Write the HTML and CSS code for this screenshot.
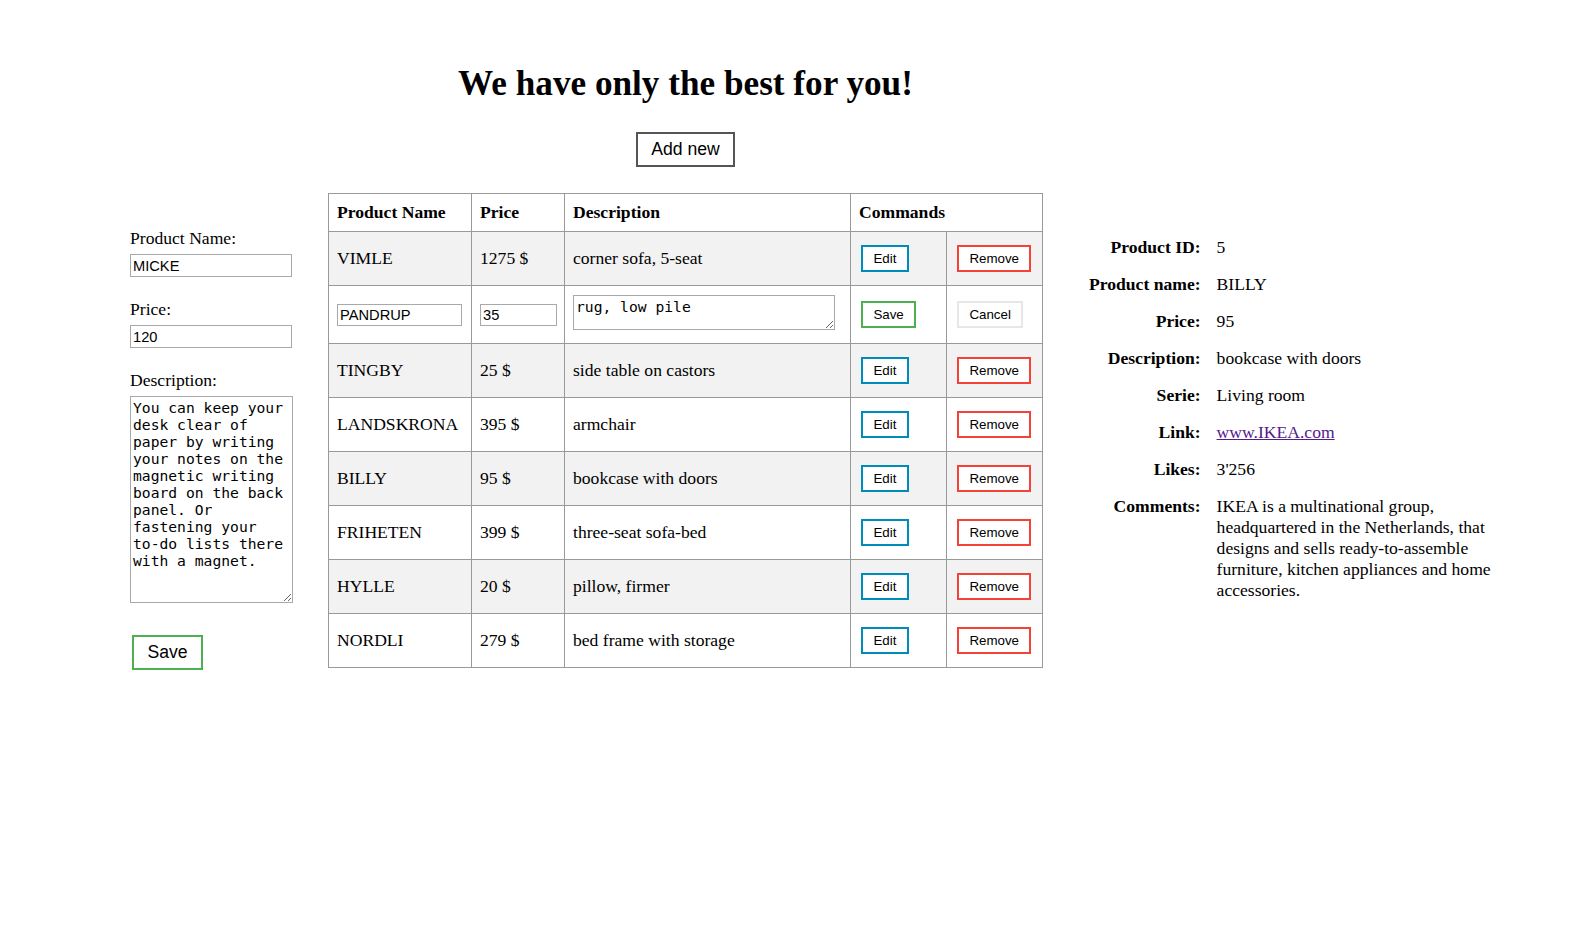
FILE: index.html
```html
<!DOCTYPE html>
<html lang="en">
<head>
<meta charset="utf-8">
<title>Products</title>
<link rel="stylesheet" href="styles.css">
</head>
<body>
<div class="page">
  <form class="side-form">
    <label class="field-label" for="f-name">Product Name:</label>
    <input class="field-input" id="f-name" type="text" value="MICKE">
    <label class="field-label field-label-gap" for="f-price">Price:</label>
    <input class="field-input" id="f-price" type="text" value="120">
    <label class="field-label field-label-gap" for="f-desc">Description:</label>
    <textarea class="field-textarea" id="f-desc">You can keep your desk clear of paper by writing your notes on the magnetic writing board on the back panel. Or fastening your to-do lists there with a magnet.</textarea>
    <button class="btn btn-lg btn-green btn-form-save" type="button">Save</button>
  </form>

  <main class="main">
    <h1 class="title">We have only the best for you!</h1>
    <button class="btn btn-lg btn-dark" type="button">Add new</button>
    <table class="products">
      <colgroup>
        <col class="col-name">
        <col class="col-price">
        <col class="col-desc">
        <col class="col-cmd">
        <col class="col-cmd">
      </colgroup>
      <thead>
        <tr>
          <th>Product Name</th>
          <th>Price</th>
          <th>Description</th>
          <th colspan="2">Commands</th>
        </tr>
      </thead>
      <tbody>
        <tr>
          <td>VIMLE</td><td>1275 $</td><td>corner sofa, 5-seat</td>
          <td><button class="btn btn-sm btn-blue" type="button">Edit</button></td>
          <td><button class="btn btn-sm btn-red" type="button">Remove</button></td>
        </tr>
        <tr class="edit-row">
          <td><input class="cell-input cell-input-name" type="text" value="PANDRUP"></td>
          <td><input class="cell-input cell-input-price" type="text" value="35"></td>
          <td><textarea class="cell-textarea">rug, low pile</textarea></td>
          <td><button class="btn btn-sm btn-green" type="button">Save</button></td>
          <td><button class="btn btn-sm btn-gray" type="button">Cancel</button></td>
        </tr>
        <tr>
          <td>TINGBY</td><td>25 $</td><td>side table on castors</td>
          <td><button class="btn btn-sm btn-blue" type="button">Edit</button></td>
          <td><button class="btn btn-sm btn-red" type="button">Remove</button></td>
        </tr>
        <tr>
          <td>LANDSKRONA</td><td>395 $</td><td>armchair</td>
          <td><button class="btn btn-sm btn-blue" type="button">Edit</button></td>
          <td><button class="btn btn-sm btn-red" type="button">Remove</button></td>
        </tr>
        <tr>
          <td>BILLY</td><td>95 $</td><td>bookcase with doors</td>
          <td><button class="btn btn-sm btn-blue" type="button">Edit</button></td>
          <td><button class="btn btn-sm btn-red" type="button">Remove</button></td>
        </tr>
        <tr>
          <td>FRIHETEN</td><td>399 $</td><td>three-seat sofa-bed</td>
          <td><button class="btn btn-sm btn-blue" type="button">Edit</button></td>
          <td><button class="btn btn-sm btn-red" type="button">Remove</button></td>
        </tr>
        <tr>
          <td>HYLLE</td><td>20 $</td><td>pillow, firmer</td>
          <td><button class="btn btn-sm btn-blue" type="button">Edit</button></td>
          <td><button class="btn btn-sm btn-red" type="button">Remove</button></td>
        </tr>
        <tr>
          <td>NORDLI</td><td>279 $</td><td>bed frame with storage</td>
          <td><button class="btn btn-sm btn-blue" type="button">Edit</button></td>
          <td><button class="btn btn-sm btn-red" type="button">Remove</button></td>
        </tr>
      </tbody>
    </table>
  </main>

  <aside class="details">
    <div class="d-label">Product ID:</div><div class="d-value">5</div>
    <div class="d-label">Product name:</div><div class="d-value">BILLY</div>
    <div class="d-label">Price:</div><div class="d-value">95</div>
    <div class="d-label">Description:</div><div class="d-value">bookcase with doors</div>
    <div class="d-label">Serie:</div><div class="d-value">Living room</div>
    <div class="d-label">Link:</div><div class="d-value"><a class="d-link" href="#">www.IKEA.com</a></div>
    <div class="d-label">Likes:</div><div class="d-value">3'256</div>
    <div class="d-label">Comments:</div><div class="d-value d-comments">IKEA is a multinational group, headquartered in the Netherlands, that designs and sells ready-to-assemble furniture, kitchen appliances and home accessories.</div>
  </aside>
</div>
</body>
</html>
```

FILE: styles.css
```css
html, body {
  margin: 0;
  padding: 0;
  background: #fff;
}

body {
  font-family: "Liberation Serif", "Times New Roman", serif;
  font-size: 17.6px;
  color: #000;
}

.page {
  display: flex;
  align-items: flex-start;
  padding-left: 130px;
}

/* ---------- left form ---------- */
.side-form {
  display: flex;
  flex-direction: column;
  align-items: flex-start;
  width: 163px;
  margin-top: 228px;
  flex: none;
}

.field-label {
  display: block;
  line-height: normal;
}

.field-label-gap {
  margin-top: 22px;
}

.field-input {
  box-sizing: border-box;
  width: 162px;
  height: 23px;
  margin: 5px 0 0 0;
  padding: 1px 2px;
  border: 1px solid #a9a9a9;
  font-family: "Liberation Sans", Arial, sans-serif;
  font-size: 14.67px;
  color: #000;
  background: #fff;
}

.field-textarea {
  box-sizing: border-box;
  width: 163px;
  height: 207px;
  margin: 5px 0 0 0;
  padding: 2px;
  border: 1px solid #a9a9a9;
  font-family: "DejaVu Sans Mono", monospace;
  font-size: 14.67px;
  line-height: normal;
  color: #000;
  overflow: hidden;
}

.btn-form-save {
  margin: 32px 0 0 2px;
}

/* ---------- buttons ---------- */
.btn {
  background: #fff;
  color: #000;
  font-family: "Liberation Sans", Arial, sans-serif;
  border-style: solid;
  border-width: 2px;
  cursor: pointer;
  line-height: normal;
}

.btn-lg {
  font-size: 17.6px;
  padding: 5px 13.5px;
}

.btn-sm {
  font-size: 13.33px;
  padding: 4px 10.4px;
  margin: 4px 2px;
  vertical-align: baseline;
}

.btn-dark { border-color: #555555; }
.btn-green { border-color: #4caf50; }
.btn-blue { border-color: #008cba; }
.btn-red { border-color: #f44336; }
.btn-gray { border-color: #e7e7e7; }

/* ---------- main column ---------- */
.main {
  width: 715px;
  margin-left: 35px;
  flex: none;
  display: flex;
  flex-direction: column;
  align-items: center;
  padding-top: 64px;
}

.title {
  margin: 0;
  font-size: 35.2px;
  font-weight: bold;
  line-height: normal;
}

.main .btn-dark {
  margin-top: 27.6px;
}

.products {
  margin-top: 26px;
  align-self: stretch;
  width: 715px;
  border-collapse: collapse;
  table-layout: fixed;
}

.col-name { width: 143px; }
.col-price { width: 93px; }
.col-desc { width: 286px; }
.col-cmd { width: 96px; }

.products th,
.products td {
  border: 1px solid #999;
  text-align: left;
  vertical-align: middle;
  white-space: nowrap;
}

.products th {
  padding: 8.4px 8px;
  font-weight: bold;
}

.products td {
  padding: 9px 8px;
}

.products tbody tr:nth-child(odd) {
  background: #f2f2f2;
}

.cell-input {
  box-sizing: border-box;
  height: 22px;
  padding: 1px 2px;
  border: 1px solid #a9a9a9;
  font-family: "Liberation Sans", Arial, sans-serif;
  font-size: 14.67px;
  color: #000;
  background: #fff;
  vertical-align: middle;
  margin-top: -1px;
}

.cell-input-name { width: 125px; }
.cell-input-price { width: 77px; }

.cell-textarea {
  display: block;
  box-sizing: border-box;
  width: 262px;
  height: 35px;
  margin: 0 0 4px 0;
  padding: 2px;
  border: 1px solid #a9a9a9;
  font-family: "DejaVu Sans Mono", monospace;
  font-size: 14.67px;
  color: #000;
  background: #fff;
  overflow: hidden;
}

.edit-row .btn-sm {
  vertical-align: middle;
}

/* ---------- details ---------- */
.details {
  flex: none;
  margin-left: 46px;
  margin-top: 237px;
  display: grid;
  grid-template-columns: auto 290px;
  column-gap: 16px;
  row-gap: 17px;
  line-height: 20px;
}

.d-label {
  font-weight: bold;
  text-align: right;
}

.d-comments {
  line-height: 21px;
  margin-top: -0.5px;
}

.d-link {
  color: #551a8b;
  text-decoration: underline;
}
```
